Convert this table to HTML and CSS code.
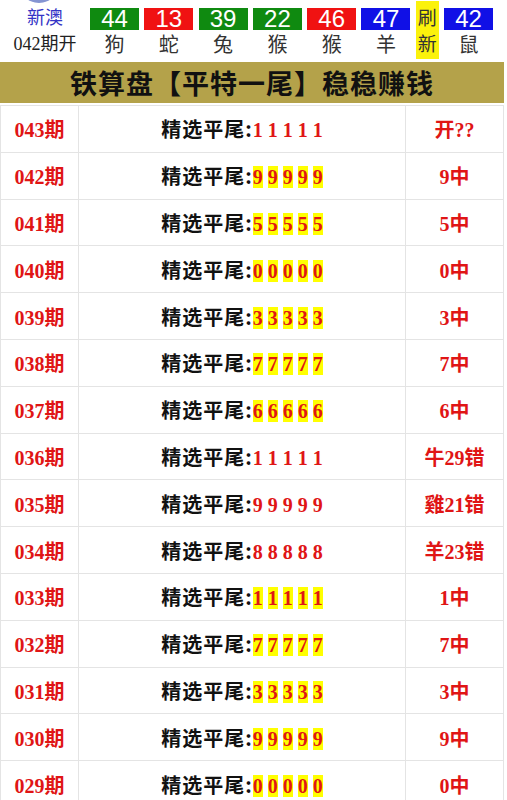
FILE: index.html
```html
<!DOCTYPE html>
<html lang="zh-CN">
<head>
    <meta charset="UTF-8">
    <meta name="viewport" content="width=device-width, initial-scale=1.0">
    <title>铁算盘【平特一尾】</title>
    <link rel="stylesheet" href="styles.css">
</head>
<body>
<div class="page">

    <!-- latest draw -->
    <div class="top">
        <div class="logo">
            <span class="dot"></span>
            <div class="site">新澳</div>
            <div class="issue">042期开</div>
        </div>
        <div class="balls">
            <div class="ball"><span class="num green">44</span><span class="sx">狗</span></div>
            <div class="ball"><span class="num red">13</span><span class="sx">蛇</span></div>
            <div class="ball"><span class="num green">39</span><span class="sx">兔</span></div>
            <div class="ball"><span class="num green">22</span><span class="sx">猴</span></div>
            <div class="ball"><span class="num red">46</span><span class="sx">猴</span></div>
            <div class="ball"><span class="num blue">47</span><span class="sx">羊</span></div>
            <div class="refresh">刷<br>新</div>
            <div class="ball"><span class="num blue">42</span><span class="sx">鼠</span></div>
        </div>
    </div>

    <div class="banner">铁算盘【平特一尾】稳稳赚钱</div>

    <table class="list">
        <tr><td class="qi">043期</td><td class="pick"><span class="lbl">精选平尾:</span><span class="nums">1 1 1 1 1</span></td><td class="res">开??</td></tr>
        <tr><td class="qi">042期</td><td class="pick"><span class="lbl">精选平尾:</span><span class="nums"><i>9</i> <i>9</i> <i>9</i> <i>9</i> <i>9</i></span></td><td class="res">9中</td></tr>
        <tr><td class="qi">041期</td><td class="pick"><span class="lbl">精选平尾:</span><span class="nums"><i>5</i> <i>5</i> <i>5</i> <i>5</i> <i>5</i></span></td><td class="res">5中</td></tr>
        <tr><td class="qi">040期</td><td class="pick"><span class="lbl">精选平尾:</span><span class="nums"><i>0</i> <i>0</i> <i>0</i> <i>0</i> <i>0</i></span></td><td class="res">0中</td></tr>
        <tr><td class="qi">039期</td><td class="pick"><span class="lbl">精选平尾:</span><span class="nums"><i>3</i> <i>3</i> <i>3</i> <i>3</i> <i>3</i></span></td><td class="res">3中</td></tr>
        <tr><td class="qi">038期</td><td class="pick"><span class="lbl">精选平尾:</span><span class="nums"><i>7</i> <i>7</i> <i>7</i> <i>7</i> <i>7</i></span></td><td class="res">7中</td></tr>
        <tr><td class="qi">037期</td><td class="pick"><span class="lbl">精选平尾:</span><span class="nums"><i>6</i> <i>6</i> <i>6</i> <i>6</i> <i>6</i></span></td><td class="res">6中</td></tr>
        <tr><td class="qi">036期</td><td class="pick"><span class="lbl">精选平尾:</span><span class="nums">1 1 1 1 1</span></td><td class="res">牛29错</td></tr>
        <tr><td class="qi">035期</td><td class="pick"><span class="lbl">精选平尾:</span><span class="nums">9 9 9 9 9</span></td><td class="res">雞21错</td></tr>
        <tr><td class="qi">034期</td><td class="pick"><span class="lbl">精选平尾:</span><span class="nums">8 8 8 8 8</span></td><td class="res">羊23错</td></tr>
        <tr><td class="qi">033期</td><td class="pick"><span class="lbl">精选平尾:</span><span class="nums"><i>1</i> <i>1</i> <i>1</i> <i>1</i> <i>1</i></span></td><td class="res">1中</td></tr>
        <tr><td class="qi">032期</td><td class="pick"><span class="lbl">精选平尾:</span><span class="nums"><i>7</i> <i>7</i> <i>7</i> <i>7</i> <i>7</i></span></td><td class="res">7中</td></tr>
        <tr><td class="qi">031期</td><td class="pick"><span class="lbl">精选平尾:</span><span class="nums"><i>3</i> <i>3</i> <i>3</i> <i>3</i> <i>3</i></span></td><td class="res">3中</td></tr>
        <tr><td class="qi">030期</td><td class="pick"><span class="lbl">精选平尾:</span><span class="nums"><i>9</i> <i>9</i> <i>9</i> <i>9</i> <i>9</i></span></td><td class="res">9中</td></tr>
        <tr><td class="qi">029期</td><td class="pick"><span class="lbl">精选平尾:</span><span class="nums"><i>0</i> <i>0</i> <i>0</i> <i>0</i> <i>0</i></span></td><td class="res">0中</td></tr>
    </table>

</div>
</body>
</html>
```

FILE: styles.css
```css
body {
    margin: 0;
    background: #fff;
    font-family: "Noto Sans CJK SC", sans-serif;
}
.page {
    width: 504px;
    overflow: hidden;
}

/* top draw bar */
.top {
    display: flex;
    height: 62px;
}
.logo {
    position: relative;
    width: 90px;
    display: flex;
    flex-direction: column;
    align-items: center;
}
.logo .dot {
    position: absolute;
    top: -40px;
    left: 18px;
    width: 42px;
    height: 43px;
    border-radius: 50%;
    background: #8494d2;
}
.site {
    margin-top: 5px;
    font-size: 18px;
    line-height: 22px;
    color: #3434c6;
}
.issue {
    margin-top: 7px;
    font-family: "Liberation Serif", "Noto Sans CJK SC", serif;
    font-size: 18px;
    line-height: 20px;
    color: #222;
}
.balls {
    display: flex;
    gap: 5.3px;
}
.ball {
    width: 49px;
    display: flex;
    flex-direction: column;
    align-items: center;
    padding-top: 8px;
}
.num {
    display: block;
    width: 100%;
    height: 22px;
    line-height: 22px;
    text-align: center;
    color: #fff;
    font-family: "Liberation Sans", Arial, sans-serif;
    font-size: 24px;
}
.green { background: #0f8a10; }
.red { background: #f01212; }
.blue { background: #1010e6; }
.sx {
    margin-top: 3px;
    font-size: 20px;
    line-height: 22px;
    color: #333;
}
.refresh {
    width: 23px;
    height: 58px;
    margin-top: 1px;
    background: #fbf20c;
    text-align: center;
    font-size: 19px;
    line-height: 26px;
    color: #333;
    padding-top: 3px;
    box-sizing: border-box;
}

/* title */
.banner {
    height: 41px;
    line-height: 41px;
    background: #b4a24a;
    text-align: center;
    font-size: 27px;
    font-weight: bold;
    color: #111;
    letter-spacing: 1px;
}

/* list */
.list {
    width: 504px;
    margin-top: 2px;
    border-collapse: collapse;
    table-layout: fixed;
}
.list tr {
    height: 46.8px;
}
.list td {
    border: 1px solid #e4e4e4;
    text-align: center;
    padding: 0;
    font-weight: bold;
    font-size: 20px;
}
.qi {
    width: 77px;
    color: #e01515;
    font-family: "Liberation Serif", "Noto Sans CJK SC", serif;
}
.pick {
    color: #111;
}
.lbl {
    font-family: "Noto Sans CJK SC", sans-serif;
    letter-spacing: 1px;
}
.nums {
    font-family: "Liberation Serif", serif;
    color: #e01515;
}
.nums i {
    font-style: normal;
    background: #ffff00;
}
.res {
    width: 97px;
    color: #e01515;
    font-family: "Liberation Serif", "Noto Sans CJK SC", serif;
}
```
